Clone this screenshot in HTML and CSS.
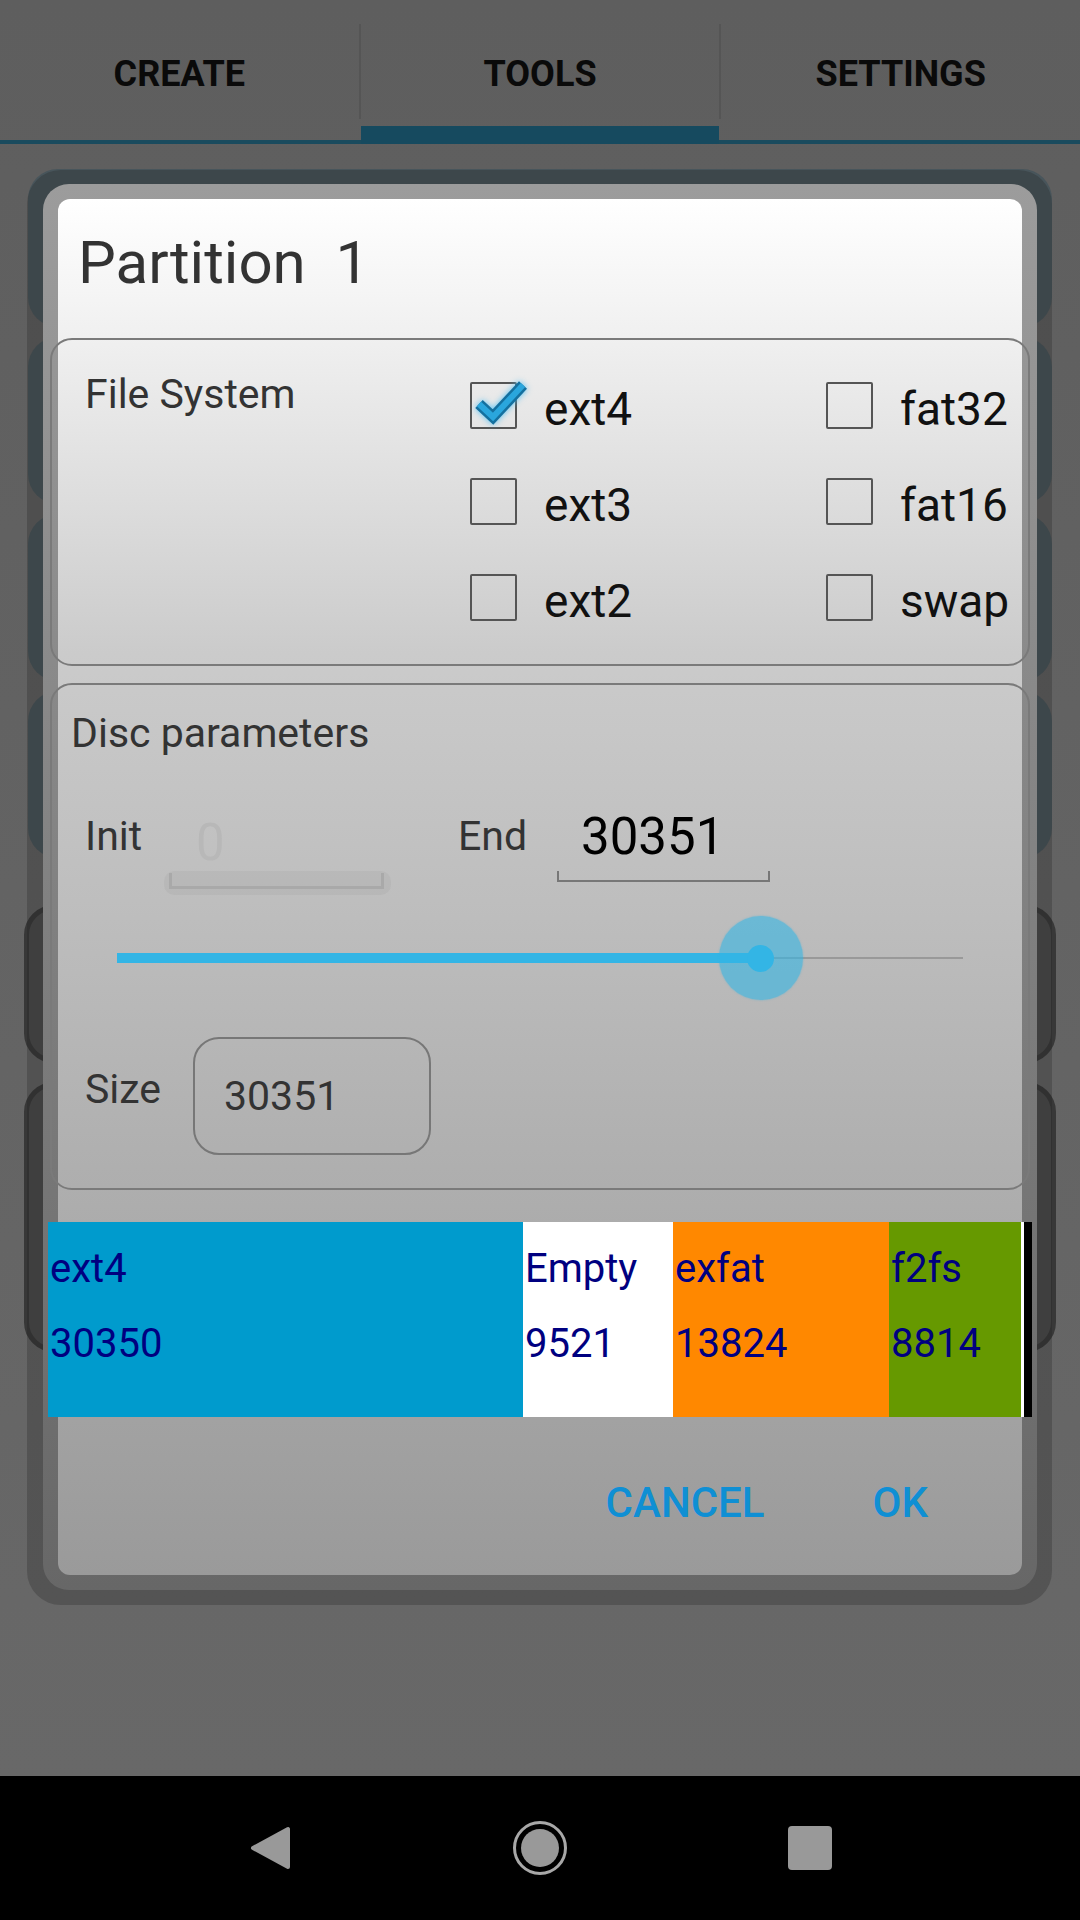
FILE: index.html
```html
<!DOCTYPE html>
<html lang="en">

<head>
    <meta charset="UTF-8">
    <meta name="viewport" content="width=device-width, initial-scale=1.0">
    <title>Partition 1</title>
    <link rel="stylesheet" href="styles.css">
</head>

<body>
    <div class="screen">

        <header class="tabs">
            <div class="tab">CREATE</div>
            <div class="divider"></div>
            <div class="tab active">TOOLS</div>
            <div class="divider"></div>
            <div class="tab">SETTINGS</div>
        </header>

        <!-- the list behind the dialog -->
        <main class="list">
            <div class="card dim short"></div>
            <div class="card dim mid"></div>
            <div class="card dim mid"></div>
            <div class="card dim mid"></div>
            <div class="card outline short gap-big"></div>
            <div class="card outline tall"></div>
        </main>

        <!-- Partition dialog -->
        <div class="dialog">
            <div class="ring">
                <div class="sheet">
                    <div class="content">

                        <h1 class="title">Partition&nbsp; 1</h1>

                        <div class="box fsBox">
                            <div class="fsLabel">File System</div>
                            <div class="fsGrid">
                                <label class="opt">
                                    <span class="check checked">
                                        <svg class="tick" width="47" height="47" viewBox="0 0 47 47">
                                            <path d="M9 22 L23 35 L53 3" fill="none" stroke="#14709f" stroke-width="11" />
                                            <path d="M9 22 L23 35 L53 3" fill="none" stroke="#2aa6dd" stroke-width="6" />
                                        </svg>
                                    </span>
                                    <span class="optText">ext4</span>
                                </label>
                                <label class="opt"><span class="check"></span><span class="optText">fat32</span></label>
                                <label class="opt"><span class="check"></span><span class="optText">ext3</span></label>
                                <label class="opt"><span class="check"></span><span class="optText">fat16</span></label>
                                <label class="opt"><span class="check"></span><span class="optText">ext2</span></label>
                                <label class="opt"><span class="check"></span><span class="optText">swap</span></label>
                            </div>
                        </div>

                        <div class="box discBox">
                            <div class="discTitle">Disc parameters</div>

                            <div class="rangeRow">
                                <div class="fieldLabel initLabel">Init</div>
                                <div class="field disabled">0</div>
                                <div class="fieldLabel endLabel">End</div>
                                <div class="field endField">30351</div>
                            </div>

                            <div class="slider">
                                <div class="track"></div>
                                <div class="trackFill" style="width: 76.1%"></div>
                                <div class="thumb" style="left: 76.1%"><span></span></div>
                            </div>

                            <div class="sizeRow">
                                <div class="fieldLabel sizeLabel">Size</div>
                                <div class="sizeBox">30351</div>
                            </div>
                        </div>

                        <div class="bar">
                            <div class="seg ext4" style="width: 475px"><div>ext4</div><div>30350</div></div>
                            <div class="seg empty" style="width: 150px"><div>Empty</div><div>9521</div></div>
                            <div class="seg exfat" style="width: 216px"><div>exfat</div><div>13824</div></div>
                            <div class="seg f2fs" style="width: 132px"><div>f2fs</div><div>8814</div></div>
                            <div class="barEnd"></div>
                        </div>

                        <div class="actions">
                            <button>CANCEL</button>
                            <button>OK</button>
                        </div>

                    </div>
                </div>
            </div>
        </div>

        <nav class="navbar">
            <div class="navSlot">
                <svg width="40" height="44" viewBox="0 0 40 44">
                    <polygon points="38,3 38,41 3,22" fill="#999" stroke="#999" stroke-width="4" stroke-linejoin="round" />
                </svg>
            </div>
            <div class="navSlot">
                <svg width="56" height="56" viewBox="0 0 56 56">
                    <circle cx="28" cy="28" r="25.5" fill="none" stroke="#a8a8a8" stroke-width="3" />
                    <circle cx="28" cy="28" r="19" fill="#999" />
                </svg>
            </div>
            <div class="navSlot">
                <svg width="44" height="44" viewBox="0 0 44 44">
                    <rect x="0" y="0" width="44" height="44" rx="4" fill="#999" />
                </svg>
            </div>
        </nav>

    </div>
</body>

</html>
```

FILE: styles.css
```css
body {
    margin: 0;
    font-family: Roboto, "Noto Sans", sans-serif;
}

.screen {
    position: relative;
    width: 1080px;
    height: 1920px;
    display: flex;
    flex-direction: column;
    background: linear-gradient(#5e5e5e, #686868 1776px);
    overflow: hidden;
}

/* tab bar */

.tabs {
    display: flex;
    align-items: flex-start;
    height: 144px;
    box-shadow: inset 0 -4px #1a4b5e;
}

.tab {
    flex: 1;
    height: 144px;
    box-sizing: border-box;
    padding-top: 52px;
    text-align: center;
    font-size: 36px;
    line-height: 44px;
    font-weight: 700;
    color: #0a0a0a;
}

.tab.active {
    border-bottom: 18px solid #164a5f;
}

.divider {
    width: 2px;
    height: 95px;
    margin-top: 24px;
    background-color: #555;
}

/* list behind */

.list {
    flex: 1;
    padding: 25px 24px 0;
}

.card {
    border-radius: 30px;
    box-sizing: border-box;
    margin-bottom: 10px;
}

.card.dim {
    background-color: #48555b;
    margin-left: 4px;
    margin-right: 4px;
}

.card.outline {
    border: 5px solid #383838;
    background-color: #4b4b4b;
    margin-bottom: 19px;
}

.short {
    height: 158px;
}

.mid {
    height: 167px;
}

.tall {
    height: 270px;
}

.gap-big {
    margin-top: 47px;
}

/* dialog */

.dialog {
    position: absolute;
    top: 170px;
    left: 27px;
    width: 1025px;
    height: 1435px;
    box-sizing: border-box;
    padding: 14px 15px 15px 16px;
    border-radius: 34px;
    background-color: rgba(34, 34, 34, 0.27);
}

.ring {
    height: 100%;
    box-sizing: border-box;
    padding: 15px;
    border-radius: 26px;
    background: linear-gradient(#9c9c9c, #676767);
}

.sheet {
    height: 100%;
    border-radius: 12px;
    background: linear-gradient(#ffffff 0%, #f0f0f0 10%, #cbcbcb 33%, #bebebe 51%, #b0b0b0 69%, #9a9a9a 100%);
}

.content {
    margin: 0 -8px;
}

.title {
    margin: 0;
    padding: 28px 0 39px 28px;
    font-size: 60px;
    line-height: 72px;
    font-weight: 400;
    color: #333;
}

.box {
    border: 2px solid #7a7a7a;
    border-radius: 22px;
}

.fsBox {
    display: flex;
    padding: 30px 0 43px 33px;
}

.fsLabel {
    width: 385px;
    font-size: 41px;
    line-height: 48px;
    color: #333;
}

.fsGrid {
    margin-top: 12px;
    display: grid;
    grid-template-columns: 356px auto;
    grid-auto-rows: 47px;
    row-gap: 49px;
}

.opt {
    display: flex;
    align-items: flex-start;
    gap: 27px;
    height: 47px;
    font-size: 46px;
    line-height: 47px;
    color: #111;
}

.optText {
    padding-top: 4px;
}

.check {
    position: relative;
    width: 47px;
    height: 47px;
    box-sizing: border-box;
    border: 2.5px solid #555;
    border-radius: 2px;
}

.tick {
    position: absolute;
    left: -2.5px;
    top: -2.5px;
    overflow: visible;
    filter: drop-shadow(0 0 3px rgba(70, 190, 245, 0.9));
}

.discBox {
    margin-top: 17px;
    padding: 24px 0 33px 19px;
}

.discTitle {
    font-size: 41px;
    line-height: 48px;
    color: #333;
}

.rangeRow {
    display: flex;
    align-items: flex-start;
    margin: 50px 0 0 14px;
}

.fieldLabel {
    font-size: 41px;
    line-height: 48px;
    color: #333;
}

.initLabel {
    width: 84px;
    margin-top: 5px;
}

.endLabel {
    width: 99px;
    margin: 5px 0 0 74px;
}

.field {
    position: relative;
    box-sizing: border-box;
    font-size: 51px;
    line-height: 60px;
}

.field::after {
    content: "";
    position: absolute;
    left: 0;
    right: 0;
    bottom: 0;
    box-sizing: border-box;
    border: 2px solid #777;
    border-top: none;
}

.disabled {
    width: 215px;
    padding: 6px 0 16px 27px;
    color: #b8b8b8;
}

.disabled::after {
    height: 16px;
    border-width: 3px;
    border-color: #a9a9a9;
}

.disabled::before {
    content: "";
    position: absolute;
    left: -5px;
    right: -7px;
    bottom: -6px;
    height: 24px;
    border-radius: 10px;
    background-color: rgba(0, 0, 0, 0.035);
}

.endField {
    width: 213px;
    padding: 0 0 15px 24px;
    color: #000;
}

.endField::after {
    height: 11px;
}

.slider {
    position: relative;
    width: 846px;
    height: 116px;
    margin: 11px 0 0 46px;
}

.track {
    position: absolute;
    left: 0;
    right: 0;
    top: 57px;
    height: 2px;
    background-color: #999;
}

.trackFill {
    position: absolute;
    left: 0;
    top: 53px;
    height: 10px;
    background-color: #33b5e5;
}

.thumb {
    position: absolute;
    top: 58px;
    width: 84px;
    height: 84px;
    border-radius: 50%;
    transform: translate(-50%, -50%);
    background-color: rgba(51, 181, 229, 0.6);
    box-shadow: 0 0 2px rgba(51, 181, 229, 0.6);
    display: flex;
    align-items: center;
    justify-content: center;
}

.thumb span {
    width: 27px;
    height: 27px;
    border-radius: 50%;
    background-color: #33b5e5;
}

.sizeRow {
    display: flex;
    align-items: flex-start;
    margin: 21px 0 0 14px;
}

.sizeLabel {
    width: 108px;
    margin-top: 28px;
}

.sizeBox {
    width: 238px;
    height: 118px;
    box-sizing: border-box;
    display: flex;
    align-items: center;
    padding-left: 29px;
    border: 2.5px solid #777;
    border-radius: 26px;
    font-size: 41px;
    line-height: 48px;
    color: #333;
}

/* partition bar */

.bar {
    display: flex;
    height: 195px;
    margin: 32px -2px 0;
}

.seg {
    box-sizing: border-box;
    padding: 9px 0 0 2px;
    font-size: 40px;
    line-height: 75px;
    color: #000080;
    white-space: nowrap;
    overflow: hidden;
}

.ext4 {
    background-color: #009bcd;
}

.empty {
    background-color: #ffffff;
}

.exfat {
    background-color: #ff8800;
}

.f2fs {
    background-color: #669900;
}

.barEnd {
    width: 8px;
    border-left: 3px solid #fff;
    background-color: #000;
}

.actions {
    display: flex;
    justify-content: flex-end;
    gap: 108px;
    margin-top: 62px;
    padding-right: 102px;
}

.actions button {
    border: none;
    padding: 0;
    background-color: transparent;
    font-family: Roboto, sans-serif;
    font-size: 42px;
    line-height: 48px;
    font-weight: 500;
    color: #0f8fd4;
}

/* system nav */

.navbar {
    height: 144px;
    flex-shrink: 0;
    background-color: #000;
    display: flex;
    justify-content: center;
    align-items: center;
}

.navSlot {
    width: 270px;
    display: flex;
    justify-content: center;
    align-items: center;
}
```
